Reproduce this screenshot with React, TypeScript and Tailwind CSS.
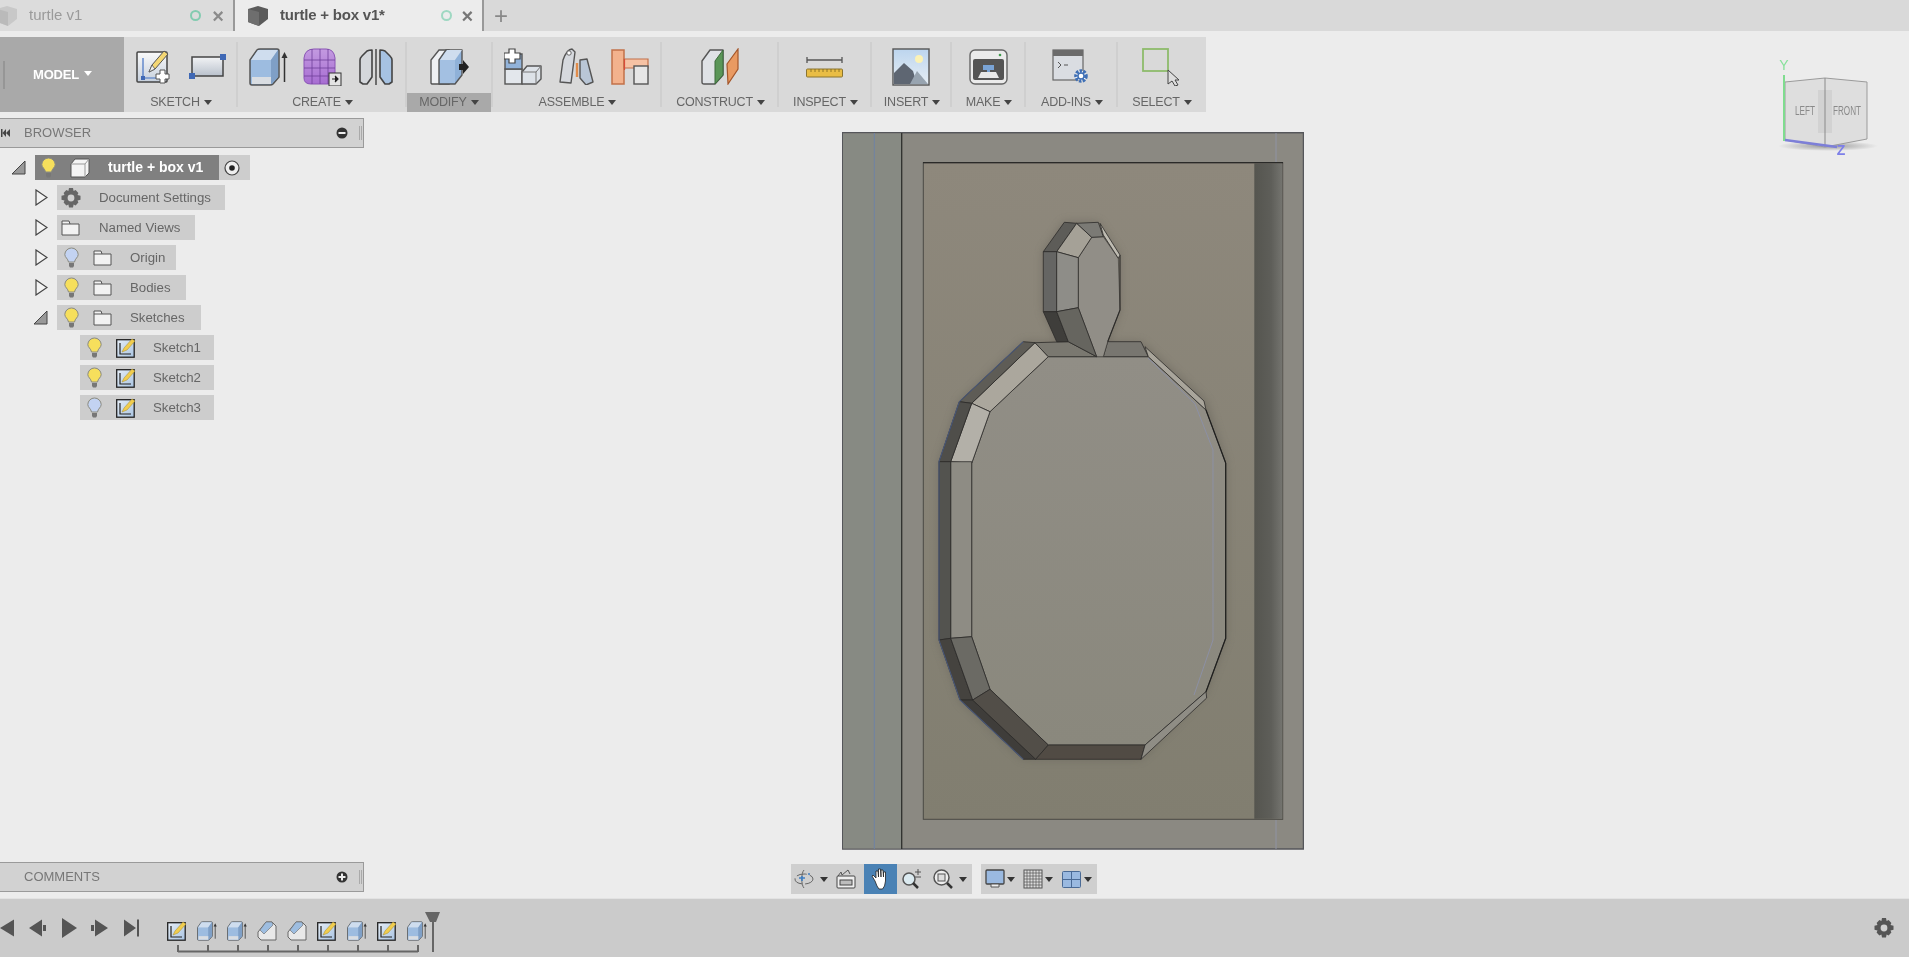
import type { ReactNode } from "react";

type SizeProps = { w?: number; h?: number };

const Caret = ({ color = "#555" }: { color?: string }) => (
  <svg width="8" height="5" viewBox="0 0 8 5" className="shrink-0">
    <path d="M0 0h8L4 5z" fill={color} />
  </svg>
);

const TabCube = ({ left, right }: { left: string; right: string }) => (
  <svg width="22" height="20" viewBox="0 0 22 20">
    <path d="M1 3l10-3 10 3v10l-9 7-11-4z" fill={right} />
    <path d="M1 3l11 3v14l-11-4z" fill={left} />
  </svg>
);

const SketchIcon = ({ w = 35, h = 34 }: SizeProps) => (
  <svg width={w} height={h} viewBox="0 0 35 34">
    <defs>
      <linearGradient id="sk1" x1="0" y1="0" x2="0" y2="1">
        <stop offset="0" stopColor="#fafafa" />
        <stop offset="1" stopColor="#c5cfdc" />
      </linearGradient>
    </defs>
    <rect x="1" y="2" width="30" height="30" rx="1" fill="url(#sk1)" stroke="#444" strokeWidth="1.5" />
    <path d="M7 8v20h18" fill="none" stroke="#4472c4" strokeWidth="1.2" />
    <rect x="5" y="26" width="4" height="4" fill="#3f68b5" />
    <path d="M13 22l3-7L28 1l4 3-13 15z" fill="#f4d774" stroke="#555" strokeWidth="1" />
    <path d="M13 22l3-7 3 4z" fill="#eee" stroke="#555" strokeWidth="0.8" />
    <path d="M24 20h5v4h4v5h-4v4h-5v-4h-4v-5h4z" fill="#fff" stroke="#555" strokeWidth="1" />
  </svg>
);

const RectIcon = () => (
  <svg width="37" height="25" viewBox="0 0 37 25">
    <defs>
      <linearGradient id="re1" x1="0" y1="0" x2="0" y2="1">
        <stop offset="0" stopColor="#f2f3f5" />
        <stop offset="1" stopColor="#b9c1cc" />
      </linearGradient>
    </defs>
    <rect x="3" y="3" width="31" height="19" fill="url(#re1)" stroke="#444" strokeWidth="1.5" />
    <rect x="31" y="0" width="6" height="6" fill="#3f68b5" />
    <rect x="0" y="19" width="6" height="6" fill="#3f68b5" />
  </svg>
);

const ExtrudeIcon = ({ w = 39, h = 38 }: SizeProps) => (
  <svg width={w} height={h} viewBox="0 0 39 38">
    <path d="M1 12L8 2q1-1 3-1h17q2 0 2 2v26l-6 7q-1 1-3 1H3q-2 0-2-2z" fill="#8fb1d8" stroke="#555" strokeWidth="1.5" strokeLinejoin="round" />
    <path d="M2 12h20v24H2z" fill="#9dbce0" />
    <path d="M2 12L9 2h20l-7 10z" fill="#cfddee" />
    <path d="M22 12L29 2v27l-7 7z" fill="#7f9fc6" />
    <path d="M3 29h19v7H3z" fill="#d9dde2" />
    <path d="M35.500 34V7" stroke="#333" strokeWidth="1.500" />
    <path d="M32.500 10l3-6 3 6z" fill="#333" />
  </svg>
);

const FormIcon = () => (
  <svg width="39" height="38" viewBox="0 0 39 38">
    <defs>
      <linearGradient id="fo1" x1="0" y1="0" x2="0" y2="1">
        <stop offset="0" stopColor="#c39ae0" />
        <stop offset="1" stopColor="#a76dd2" />
      </linearGradient>
    </defs>
    <path d="M1 10Q2 1 11 1h12q8 0 9 9v20q0 6-6 6H8q-7 0-7-6z" fill="url(#fo1)" stroke="#8a55b5" />
    <path d="M1 12h31M1 20h31M1 28h31M9 1v35M17 1v35M25 1v35" stroke="#6f3f99" strokeWidth="0.8" fill="none" />
    <rect x="26" y="25" width="12" height="13" fill="#e4e4e4" stroke="#333" />
    <path d="M29 31h4M32 28l3 3-3 3" stroke="#222" fill="#222" strokeWidth="1.2" />
  </svg>
);

const MirrorIcon = () => (
  <svg width="34" height="36" viewBox="0 0 34 36">
    <path d="M1 33V11q0-2 2-4l5-5q2-1 5-1v27l-5 7H4z" fill="#d4d7db" stroke="#444" strokeWidth="1.600" strokeLinejoin="round" />
    <path d="M33 33V11q0-2-2-4l-5-5q-2-1-5-1v27l5 7h4z" fill="#a6c2e2" stroke="#444" strokeWidth="1.600" strokeLinejoin="round" />
    <path d="M17 0v36" stroke="#333" strokeWidth="1.300" />
  </svg>
);

const PressPullIcon = () => (
  <svg width="39" height="38" viewBox="0 0 39 38">
    <path d="M1 35V12L9 2h10v34H3q-2 0-2-1z" fill="#eef0f3" stroke="#555" strokeWidth="1.400" />
    <path d="M9 36V12l7-10h16v25l-7 9z" fill="#8fb1d8" stroke="#555" strokeWidth="1.400" strokeLinejoin="round" />
    <path d="M10 12h15v23H10z" fill="#a3c0e2" />
    <path d="M10 12l7-10h15l-7 10z" fill="#cfddee" />
    <path d="M29 16h4v-4l6 7-6 7v-4h-4z" fill="#222" />
  </svg>
);

const NewComponentIcon = () => (
  <svg width="38" height="37" viewBox="0 0 38 37">
    <rect x="1" y="21" width="17" height="15" fill="#e3e7ec" stroke="#555" strokeWidth="1.400" />
    <path d="M1 6h17v15H1z" fill="#92b3da" stroke="#555" strokeWidth="1.400" />
    <path d="M18 24l5-6h14v13l-5 5H18z" fill="#dde2e8" stroke="#555" strokeWidth="1.400" strokeLinejoin="round" />
    <path d="M18 24h14l5-6M32 24v12" fill="none" stroke="#777" />
    <path d="M5 1h6v4h5v6h-5v4H5v-4H0V5h5z" fill="#fff" stroke="#444" strokeWidth="1.200" />
  </svg>
);

const JointIcon = () => (
  <svg width="35" height="37" viewBox="0 0 35 37">
    <path d="M1 34L4 12Q8 1 13 1l3 3-1 8-3 23z" fill="#d6d9de" stroke="#555" strokeWidth="1.400" strokeLinejoin="round" />
    <path d="M21 12l7-1 6 23-7 3-6-7z" fill="#b9c6d6" stroke="#555" strokeWidth="1.400" strokeLinejoin="round" />
    <circle cx="10" cy="5" r="2.200" fill="#fff" stroke="#666" />
    <path d="M18 15v14" stroke="#e18c4a" strokeWidth="2.400" />
  </svg>
);

const AsBuiltIcon = () => (
  <svg width="38" height="37" viewBox="0 0 38 37">
    <path d="M1 2h12v34H1z" fill="#f3b28d" stroke="#c2714a" strokeWidth="1.500" />
    <path d="M13 11h24v9H13z" fill="#f6c2a4" stroke="#c2714a" strokeWidth="1.200" />
    <path d="M13.500 11v11" stroke="#d94b3a" strokeWidth="1.200" />
    <rect x="23" y="18" width="14" height="18" fill="#e6e6e6" stroke="#555" strokeWidth="1.400" />
  </svg>
);

const PlaneIcon = () => (
  <svg width="38" height="37" viewBox="0 0 38 37">
    <path d="M1 13L9 2h13v25l-8 9H3q-2 0-2-2z" fill="#dfe2e6" stroke="#555" strokeWidth="1.400" strokeLinejoin="round" />
    <path d="M14 13l8-11v25l-8 9z" fill="#5a9658" stroke="#3d6b3c" />
    <path d="M26 16L37 1v20L27 36z" fill="#e99a62" stroke="#a4562a" strokeWidth="1.200" />
  </svg>
);

const RulerIcon = () => (
  <svg width="37" height="22" viewBox="0 0 37 22">
    <path d="M1 1v6M36 1v6M1 4h35" stroke="#555" strokeWidth="1.300" fill="none" />
    <rect x="0.500" y="13" width="36" height="8" rx="1" fill="#e9bd45" stroke="#8a7430" />
    <path d="M5 13v3M9 13v3M13 13v3M17 13v3M21 13v3M25 13v3M29 13v3M33 13v3" stroke="#7a6420" strokeWidth="0.800" />
  </svg>
);

const InsertIcon = () => (
  <svg width="38" height="38" viewBox="0 0 38 38">
    <defs>
      <linearGradient id="in1" x1="0" y1="0" x2="0" y2="1">
        <stop offset="0" stopColor="#bcd5ee" />
        <stop offset="1" stopColor="#e7eef4" />
      </linearGradient>
    </defs>
    <rect x="1" y="1" width="36" height="36" fill="url(#in1)" stroke="#555" strokeWidth="1.400" />
    <circle cx="27" cy="11" r="4" fill="#fbf2b5" />
    <path d="M2 36V25l10-10 9 8 4 13z" fill="#5e6672" />
    <path d="M18 36l7-13 11 13z" fill="#98a4b0" />
  </svg>
);

const MakeIcon = () => (
  <svg width="39" height="36" viewBox="0 0 39 36">
    <rect x="1" y="1" width="37" height="34" rx="5" fill="#ebebeb" stroke="#666" strokeWidth="1.400" />
    <rect x="4" y="10" width="31" height="21" rx="2" fill="#555" />
    <path d="M14 16h11v5h-4v2h-3v-2h-4z" fill="#7aa4d6" />
    <path d="M9 29l3-6h15l3 6z" fill="#e8e8e8" />
    <circle cx="31" cy="6" r="1.300" fill="#3f9b4c" />
  </svg>
);

const AddInIcon = () => (
  <svg width="38" height="36" viewBox="0 0 38 36">
    <rect x="1" y="1" width="30" height="30" fill="#dadde2" stroke="#666" strokeWidth="1.200" />
    <rect x="1" y="1" width="30" height="6" fill="#6b6b6b" />
    <path d="M6 13l3 3-3 3M12 16h4" fill="none" stroke="#555" />
    <circle cx="29" cy="27" r="5" fill="#fff" stroke="#3f6fb5" strokeWidth="3.600" strokeDasharray="2.400 1.200" />
    <circle cx="29" cy="27" r="3" fill="#fff" stroke="#3f6fb5" strokeWidth="1.400" />
  </svg>
);

const SelectIcon = () => (
  <svg width="38" height="38" viewBox="0 0 38 38">
    <rect x="1" y="1" width="25" height="22" fill="none" stroke="#8dbb6b" strokeWidth="1.800" />
    <path d="M26 22v14l4-3 3 5 3-1-3-5h4z" fill="#ddd" stroke="#444" strokeWidth="1" />
  </svg>
);

const Bulb = ({ off }: { off?: boolean }) => (
  <svg width="15" height="21" viewBox="0 0 15 21" className="shrink-0">
    <path
      d="M7.500 1A6.700 6.700 0 0 1 14.200 7.500C14.200 10.500 11 11.500 10.500 15h-6C4 11.500.8 10.500.8 7.500A6.700 6.700 0 0 1 7.500 1z"
      fill={off ? "#c3d3f2" : "#f6df5c"}
      stroke="#8a8a80"
    />
    <path d="M5 16h5v3l-1 1.500H6L5 19z" fill="#777" />
  </svg>
);

const FolderIcon = () => (
  <svg width="19" height="16" viewBox="0 0 19 16" className="shrink-0">
    <path d="M1 1h7l1 3h9v11H1z" fill="#f2f2f2" stroke="#555" />
    <path d="M1 4h8" stroke="#555" />
  </svg>
);

const GearIcon = ({ size = 20, color = "#666" }: { size?: number; color?: string }) => (
  <svg width={size} height={size} viewBox="0 0 20 20" className="shrink-0">
    <path
      d="M8 0h4l.6 3 2-.9 2.800 2.800L16.500 7l3 .8v4l-3 .7.9 2.100-2.800 2.800-2-.9-.6 3H8l-.6-3-2 .9-2.800-2.800.9-2.100-3-.7v-4l3-.8-.9-2.100L5.400 2.100l2 .9z"
      fill={color}
    />
    <circle cx="10" cy="10" r="3.400" fill="#d0d0d0" />
  </svg>
);

const SketchTiny = ({ size = 20 }: { size?: number }) => (
  <svg width={size} height={size} viewBox="0 0 20 20" className="shrink-0">
    <defs>
      <linearGradient id="st1" x1="0" y1="0" x2="1" y2="1">
        <stop offset="0" stopColor="#e6eef7" />
        <stop offset="1" stopColor="#a9c4e2" />
      </linearGradient>
    </defs>
    <rect x="0.700" y="1.700" width="17.500" height="17.500" fill="url(#st1)" stroke="#222" strokeWidth="1.300" />
    <path d="M4 5v11h11" stroke="#222" fill="none" strokeWidth="1.200" />
    <path d="M6 14l2-4 8-9 3 2-8 9z" fill="#f1cd4e" stroke="#a58a2a" strokeWidth="0.500" />
  </svg>
);

const ChamferTiny = () => (
  <svg width="20" height="20" viewBox="0 0 20 20">
    <path d="M1 11L9 1h6l4 4v14H4l-3-3z" fill="#e8e8e8" stroke="#666" />
    <path d="M3 9l6-8 6 0 1 3-9 9z" fill="#9dbde0" stroke="#666" strokeWidth="0.600" />
  </svg>
);

const TreeArrow = ({ open }: { open?: boolean }) =>
  open ? (
    <svg width="15" height="15" viewBox="0 0 15 15" className="shrink-0">
      <path d="M1 14L14 1v13z" fill="#999" stroke="#444" />
    </svg>
  ) : (
    <svg width="13" height="17" viewBox="0 0 13 17" className="shrink-0">
      <path d="M1 1l11 7.500L1 16z" fill="#f3f3f3" stroke="#444" strokeWidth="1.200" />
    </svg>
  );

const PanelHeader = ({ title, sign, back }: { title: string; sign: "-" | "+"; back?: boolean }) => (
  <div className="flex h-[30px] w-[364px] items-center border-y border-r border-[#9a9a9a] bg-[#d2d2d2]">
    <div className="w-[24px] pl-[1px]">
      {back && (
        <svg width="9" height="8" viewBox="0 0 9 8" className="block">
          <path d="M0 0h1.500v8H0zM5 0v8L1.500 4zM9 0v8L5 4z" fill="#444" />
        </svg>
      )}
    </div>
    <span className="text-[13px] text-[#777]">{title}</span>
    <svg width="12" height="12" viewBox="0 0 12 12" className="ml-auto mr-[1px]">
      <circle cx="6" cy="6" r="5.500" fill="#333" />
      <path d={sign === "-" ? "M2.500 5h7v2h-7z" : "M2.500 5h2.500V2.500h2V5h2.500v2H7v2.500H5V7H2.500z"} fill="#eee" />
    </svg>
    <div className="ml-[10px] mr-[1px] h-[14px] w-[3px] border-x border-[#aaa]" />
  </div>
);

const TreeRow = ({
  indent,
  arrow,
  width,
  textGap,
  children,
  icon,
}: {
  indent: string;
  arrow?: ReactNode;
  width: string;
  textGap: string;
  children: string;
  icon: ReactNode;
}) => (
  <div className={`flex h-[25px] items-center ${indent}`}>
    {arrow}
    <div className={`flex h-[25px] items-center bg-[#cdcdcd] text-[13.250px] text-[#666] ${width}`}>
      {icon}
      <span className={textGap}>{children}</span>
    </div>
  </div>
);

const Group = ({
  label,
  width,
  pad,
  gap = "gap-0",
  active,
  children,
}: {
  label: string;
  width: string;
  pad: string;
  gap?: string;
  active?: boolean;
  children: ReactNode;
}) => (
  <div className={`relative flex flex-col ${width}`}>
    <div className={`flex h-[56px] items-center pt-[3px] ${pad} ${gap}`}>{children}</div>
    <div
      className={`flex h-[19px] items-center justify-center gap-[4px] text-[12.500px] tracking-[-0.2px] text-[#666] ${
        active ? "mr-[2px] bg-[#a9a9a9]" : ""
      }`}
    >
      {label}
      <Caret color="#444" />
    </div>
    <div className="absolute right-0 top-[5px] h-[65px] w-[2px] bg-[#cfcfcf]" />
  </div>
);

const Model = () => (
  <svg width="462" height="718" viewBox="842 132 462 718" className="block">
    <defs>
      <linearGradient id="floor" x1="0" y1="0" x2="0" y2="1">
        <stop offset="0" stopColor="#8e887c" />
        <stop offset="1" stopColor="#817e70" />
      </linearGradient>
      <linearGradient id="wall" x1="0" y1="0" x2="1" y2="0">
        <stop offset="0" stopColor="#55554f" />
        <stop offset="0.6" stopColor="#5e5e59" />
        <stop offset="1" stopColor="#74746f" />
      </linearGradient>
      <linearGradient id="face" x1="0" y1="0" x2="0" y2="1">
        <stop offset="0" stopColor="#918e86" />
        <stop offset="1" stopColor="#8a887d" />
      </linearGradient>
      <filter id="soft" x="-10%" y="-10%" width="120%" height="120%">
        <feGaussianBlur stdDeviation="5" />
      </filter>
    </defs>
    <rect x="842.500" y="132.700" width="461" height="716.300" fill="#8b8982" stroke="#55565a" strokeWidth="1.500" />
    <rect x="843" y="133.500" width="58.700" height="715" fill="#878a83" />
    <path d="M874.300 133v716" stroke="#6f82a6" strokeWidth="1" />
    <path d="M901.700 133v716" stroke="#2f2f2d" strokeWidth="1.300" />
    <path d="M1276 133v30M1276 819v30" stroke="#8f93a3" strokeWidth="1" />
    <rect x="923.300" y="162.700" width="359.400" height="656.600" fill="url(#floor)" stroke="#4a4944" strokeWidth="1" />
    <rect x="1254.300" y="163.400" width="28" height="655.400" fill="url(#wall)" />
    <path d="M923 162.700h360" stroke="#2a2a28" strokeWidth="1.300" />

    {/* soft shadow round the raised shape */}
    <path
      d="M1064 222H1098L1120 255V310L1108 342H1141L1206 401 1226 463V638L1206 692 1141 759H1023L960 700 939 640V462L959 402 1023 342H1057L1043 310V252z"
      fill="#5a574f"
      opacity="0.45"
      filter="url(#soft)"
    />

    {/* top face */}
    <path
      d="M1048.300 356.700H1148.300L1206 410 1225.700 463V638.300L1206 691.700 1145 745H1048.300L990 689.300 971.700 636.700V463.300L990 411.700z"
      fill="url(#face)"
      stroke="#3a3936"
      strokeWidth="0.800"
    />
    {/* ghost outline */}
    <path d="M1148 358L1195 404 1213 450V640L1194 695" fill="none" stroke="#8c90a4" strokeWidth="1" />

    {/* bevels */}
    <g stroke="#2c2b29" strokeWidth="0.800" strokeLinejoin="round">
      <path d="M1035 342.700L1048.300 356.700 990 411.700 971.700 403.300z" fill="#aba79d" />
      <path d="M1023.300 341.700L1035 342.700 971.700 403.300 959.300 401.700z" fill="#5e5c56" />
      <path d="M971.700 403.300L950.700 461.700 971.700 463.300 990 411.700z" fill="#b3b0a8" />
      <path d="M959.300 401.700L939 461.700H950.700L971.700 403.300z" fill="#4f4e4a" />
      <path d="M950.700 461.700H971.700V636.700L950.700 638.300z" fill="#8e8c84" />
      <path d="M939 461.700H950.700V638.300L939 640z" fill="#53534f" />
      <path d="M939 640L950.700 638.300 972.700 700H960z" fill="#45433f" />
      <path d="M950.700 638.300L971.700 636.700 990 689.300 972.700 700z" fill="#6b6a64" />
      <path d="M960 700H972.700L1035.700 759.300H1023.300z" fill="#3f3d3a" />
      <path d="M972.700 700L990 689.300 1048.300 745 1035.700 759.300z" fill="#524e48" />
      <path d="M1048.300 745H1145L1141 759.300H1035.700z" fill="#514b44" />
      <path d="M1145 745L1206 691.700 1206.700 698 1141 759.300z" fill="#8f8d85" />
      <path d="M1035 342.700L1048.300 356.700H1096.700L1068.300 341.700z" fill="#7a7870" />
      <path d="M1103.300 356.700L1107.700 341.700H1141L1148.300 356.700z" fill="#787670" />
      <path d="M1145 346.700L1204 401 1206 410 1148.300 356.700z" fill="#a9a59b" />

      {/* head */}
      <path d="M1078.300 257.700L1091.700 237.300 1103.300 236.700 1118.300 258.300 1120 310 1107.700 341.700 1103.300 356.700H1096.700L1078.300 307.700z" fill="#918e87" strokeWidth="0.500" />
      <path d="M1120 255V310L1107.700 341.700" fill="none" strokeWidth="1.100" />
      <path d="M1064.300 222.300L1076.700 223.300 1056.700 251.700H1043.300z" fill="#5d5c58" />
      <path d="M1076.700 223.300L1091.700 237.300 1078.300 257.700 1056.700 251.700z" fill="#a5a197" />
      <path d="M1076.700 223.300L1098.300 222.300 1103.300 236.700 1091.700 237.300z" fill="#7b7a75" />
      <path d="M1100 223.300L1120 255 1118.300 258.300 1103.300 235z" fill="#bfbcb2" />
      <path d="M1043.300 251.700H1056.700V311.700H1043.300z" fill="#656563" />
      <path d="M1056.700 251.700L1078.300 257.700V307.700L1056.700 311.700z" fill="#8e8d88" />
      <path d="M1043.300 311.700H1056.700L1068.300 341.700H1056.700z" fill="#3f3e3b" />
      <path d="M1056.700 311.700L1078.300 307.700 1096.700 356.700 1068.300 341.700z" fill="#66655f" />
    </g>
    <path d="M1225.700 463V638.300L1206 691.700M1206 410L1225.700 463" fill="none" stroke="#1f1f1e" strokeWidth="1.200" />
    <path d="M1023.300 341.700L959.300 401.700 939 461.700V640L960 700 1023.300 759.300" fill="none" stroke="#4a5878" strokeWidth="1.100" />
  </svg>
);

const ViewCube = () => (
  <svg width="110" height="110" viewBox="1770 50 110 110" className="absolute left-[1770px] top-[50px]">
    <defs>
      <radialGradient id="cubeShadow">
        <stop offset="0" stopColor="#777" stopOpacity="0.7" />
        <stop offset="1" stopColor="#777" stopOpacity="0" />
      </radialGradient>
    </defs>
    <ellipse cx="1828" cy="146" rx="50" ry="5" fill="url(#cubeShadow)" />
    <path d="M1785 82L1825 78 1867 82V139L1825 147 1785 140z" fill="#dedede" stroke="#9b9b9b" />
    <rect x="1818" y="90" width="14" height="43" fill="#d2d2d2" />
    <path d="M1825 78V147" stroke="#8a8a8a" />
    <text x="1805" y="115" textAnchor="middle" textLength="20" lengthAdjust="spacingAndGlyphs" fontSize="12" fill="#8a8a8a">
      LEFT
    </text>
    <text x="1847" y="115" textAnchor="middle" textLength="28" lengthAdjust="spacingAndGlyphs" fontSize="12" fill="#8a8a8a">
      FRONT
    </text>
    <path d="M1784 75V141" stroke="#7fdc8f" strokeWidth="2" />
    <path d="M1785 140L1837 147" stroke="#7d7fd8" strokeWidth="2.500" />
    <text x="1784" y="70" textAnchor="middle" fontSize="14" fill="#86e19a">
      Y
    </text>
    <text x="1841" y="155" textAnchor="middle" fontSize="14" fontWeight="bold" fill="#7d7fe8">
      Z
    </text>
  </svg>
);

const NavBar = () => (
  <div className="mt-[14px] flex h-[30px] gap-[9px]">
    <div className="flex w-[181px] items-center bg-[#cfcfcf]">
      <svg width="21" height="20" viewBox="0 0 21 20" className="ml-[3px]">
        <ellipse cx="10" cy="10" rx="9" ry="5" fill="none" stroke="#666" strokeDasharray="10 3" />
        <path d="M10 1c-3 3-3 15 0 18" fill="none" stroke="#666" />
        <path d="M5 9h6M8 7v5" stroke="#3f7fc4" strokeWidth="1.600" />
        <circle cx="15" cy="5" r="1" fill="#3f7fc4" />
      </svg>
      <div className="ml-[5px]">
        <Caret color="#333" />
      </div>
      <svg width="20" height="20" viewBox="0 0 20 20" className="ml-[8px]">
        <path d="M2 7l3-4 1 3 6-5 2 4" fill="none" stroke="#555" />
        <rect x="1" y="7" width="18" height="12" rx="1" fill="#efefef" stroke="#444" />
        <rect x="4" y="11" width="12" height="5" fill="#bdbdbd" stroke="#444" />
      </svg>
      <div className="ml-[8px] flex h-[30px] w-[33px] items-center justify-center bg-[#4a82b5]">
        <svg width="20" height="22" viewBox="0 0 20 22">
          <path
            d="M4 13L1 8l1-1 3 3V3h2l.5 6V1h2l.5 8V2h2l.5 7V4h2v9l-1 5-2 3H8l-2-3z"
            fill="#fff"
            stroke="#222"
            strokeWidth="0.800"
          />
        </svg>
      </div>
      <svg width="20" height="20" viewBox="0 0 20 20" className="ml-[4px]">
        <circle cx="8" cy="10" r="6" fill="#dbeaf0" stroke="#555" strokeWidth="1.500" />
        <path d="M12 14l5 5" stroke="#333" strokeWidth="2.500" />
        <path d="M14 3h6M17 0v6M14 8h6" stroke="#555" strokeWidth="1" />
      </svg>
      <svg width="20" height="20" viewBox="0 0 20 20" className="ml-[12px]">
        <circle cx="8.500" cy="8.500" r="7.500" fill="#eee" stroke="#555" strokeWidth="1.500" />
        <rect x="5" y="5" width="7" height="7" fill="#ddd" stroke="#555" />
        <path d="M14 14l5 5" stroke="#333" strokeWidth="2.500" />
      </svg>
      <div className="ml-[6px]">
        <Caret color="#333" />
      </div>
    </div>
    <div className="flex w-[116px] items-center bg-[#cfcfcf]">
      <svg width="20" height="20" viewBox="0 0 20 20" className="ml-[4px]">
        <rect x="1" y="1" width="18" height="14" rx="1" fill="#9ab9e0" stroke="#444" strokeWidth="1.300" />
        <path d="M6 15h8v3H6z" fill="#eee" stroke="#555" />
      </svg>
      <div className="ml-[2px]">
        <Caret color="#333" />
      </div>
      <svg width="20" height="20" viewBox="0 0 20 20" className="ml-[8px]">
        <rect x="1" y="1" width="18" height="18" fill="#ddd" stroke="#555" />
        <path d="M4 1v18M7 1v18M10 1v18M13 1v18M16 1v18M1 4h18M1 7h18M1 10h18M1 13h18M1 16h18" stroke="#555" strokeWidth="0.700" />
      </svg>
      <div className="ml-[2px]">
        <Caret color="#333" />
      </div>
      <svg width="19" height="17" viewBox="0 0 19 17" className="ml-[9px]">
        <rect x="0.500" y="0.500" width="18" height="16" rx="1" fill="#9ab9e0" stroke="#4a6a95" />
        <path d="M9.500 0v17M0 8.500h19" stroke="#4a6a95" />
      </svg>
      <div className="ml-[3px]">
        <Caret color="#333" />
      </div>
    </div>
  </div>
);

const Timeline = () => {
  const ticks = [0, 30, 60, 90, 120, 150, 180, 210, 240];
  return (
    <div className="flex h-[59px] items-center border-t border-[#e2e2e2] bg-[#cbcbcb] text-[#555]">
      <svg width="140" height="22" viewBox="0 0 140 22" className="shrink-0">
        <path d="M0 11L14 2.500v17z" fill="#555" />
        <path d="M29 11l13-8.500v17zM43 8h3v6h-3z" fill="#555" />
        <path d="M62 1l15 10-15 10z" fill="#555" />
        <path d="M91 8h3v6h-3zM95 2.500l13 8.500-13 8.500z" fill="#555" />
        <path d="M124 2.500l12 8.500-12 8.500zM137 2.500h2v17h-2z" fill="#555" />
      </svg>
      <div className="relative ml-[27px] h-[59px] w-[270px]">
        <div className="flex h-[42px] items-end gap-[10px]">
          <SketchTiny />
          <ExtrudeIcon w={20} h={20} />
          <ExtrudeIcon w={20} h={20} />
          <ChamferTiny />
          <ChamferTiny />
          <SketchTiny />
          <ExtrudeIcon w={20} h={20} />
          <SketchTiny />
          <ExtrudeIcon w={20} h={20} />
        </div>
        <svg width="255" height="10" viewBox="0 0 255 10" className="mt-[3px] ml-[10px]">
          <path d="M1 7.500H241" stroke="#666" strokeWidth="2" />
          {ticks.map((t) => (
            <path key={t} d={`M${t + 1} 1V8`} stroke="#666" strokeWidth="2" />
          ))}
        </svg>
        {/* playhead */}
        <svg width="16" height="41" viewBox="0 0 16 41" className="absolute left-[258px] top-[13px]">
          <path d="M0 0h15l-4 10H9v30H7V10H5z" fill="#666" />
        </svg>
      </div>
      <div className="ml-auto mr-[15px]">
        <GearIcon size={20} color="#555" />
      </div>
    </div>
  );
};

const App = () => {
  return (
    <div className="relative flex h-[957px] w-[1909px] flex-col overflow-hidden bg-[#ececec] font-['Liberation_Sans',Arial,sans-serif] blur-[0.5px]">
      {/* tabs */}
      <div className="flex h-[31px] items-center bg-[#d9d9d9]">
        <div className="flex h-[31px] w-[233px] items-center bg-[#dcdcdc] text-[15px] text-[#9a9a9a]">
          <div className="-ml-[4px] opacity-50">
            <TabCube left="#9a9a9a" right="#b5b5b5" />
          </div>
          <span className="ml-[11px]">turtle v1</span>
          <span className="ml-auto h-[11px] w-[11px] rounded-full border-2 border-[#83cbb0]" />
          <span className="ml-[11px] mr-[9px] text-[20px] font-bold leading-none text-[#8a8a8a]">×</span>
        </div>
        <div className="h-[31px] w-[2px] bg-[#999]" />
        <div className="flex h-[31px] w-[247px] items-center bg-[#ececec] text-[15px] font-bold tracking-[-0.2px] text-[#555]">
          <div className="ml-[12px]">
            <TabCube left="#6e6e6e" right="#5a5a5a" />
          </div>
          <span className="ml-[11px]">turtle + box v1*</span>
          <span className="ml-auto h-[11px] w-[11px] rounded-full border-2 border-[#9fd8c2]" />
          <span className="ml-[10px] mr-[9px] text-[20px] font-bold leading-none text-[#777]">×</span>
        </div>
        <div className="h-[31px] w-[2px] bg-[#999]" />
        <span className="ml-[10px] text-[24px] leading-none text-[#888]">+</span>
      </div>

      {/* toolbar */}
      <div className="pt-[6px]">
        <div className="flex h-[75px] w-[1206px] bg-[#d9d9d9]">
          <div className="flex w-[124px] items-center bg-[#a9a9a9] pl-[3px]">
            <div className="h-[28px] w-[2px] bg-[#969696]" />
            <span className="ml-[28px] text-[13px] font-bold tracking-[-0.2px] text-white">MODEL</span>
            <div className="ml-[5px] -mt-[2px]">
              <Caret color="#fff" />
            </div>
          </div>
          <Group label="SKETCH" width="w-[114px]" pad="pl-[12px]" gap="gap-[18px]">
            <SketchIcon />
            <RectIcon />
          </Group>
          <Group label="CREATE" width="w-[169px]" pad="pl-[11px]" gap="gap-[15px]">
            <ExtrudeIcon />
            <FormIcon />
            <div className="ml-[2px]">
              <MirrorIcon />
            </div>
          </Group>
          <Group label="MODIFY" width="w-[86px]" pad="pl-[23px]" active>
            <PressPullIcon />
          </Group>
          <Group label="ASSEMBLE" width="w-[169px]" pad="pl-[11px]" gap="gap-[17px]">
            <NewComponentIcon />
            <JointIcon />
            <AsBuiltIcon />
          </Group>
          <Group label="CONSTRUCT" width="w-[117px]" pad="pl-[39px]">
            <PlaneIcon />
          </Group>
          <Group label="INSPECT" width="w-[93px]" pad="pl-[27px]">
            <RulerIcon />
          </Group>
          <Group label="INSERT" width="w-[80px]" pad="pl-[20px]">
            <InsertIcon />
          </Group>
          <Group label="MAKE" width="w-[74px]" pad="pl-[17px]">
            <MakeIcon />
          </Group>
          <Group label="ADD-INS" width="w-[92px]" pad="pl-[26px]">
            <AddInIcon />
          </Group>
          <div className="flex w-[88px] flex-col">
            <div className="flex h-[56px] items-center pl-[24px] pt-[3px]">
              <SelectIcon />
            </div>
            <div className="flex h-[19px] items-center justify-center gap-[4px] text-[12.500px] tracking-[-0.2px] text-[#666]">
              SELECT
              <Caret color="#444" />
            </div>
          </div>
        </div>
      </div>

      {/* browser + canvas */}
      <div className="flex min-h-0 flex-1">
        <div className="flex w-[364px] flex-col pt-[6px] pb-[6px]">
          <PanelHeader title="BROWSER" sign="-" back />
          <div className="flex flex-col gap-[5px] pt-[7px]">
            <div className="flex h-[25px] items-center pl-[11px]">
              <TreeArrow open />
              <div className="ml-[9px] flex h-[25px] w-[184px] items-center bg-[#808080] pl-[6px] text-[14px] font-bold text-white">
                <Bulb />
                <svg width="20" height="20" viewBox="0 0 20 20" className="ml-[14px]">
                  <path d="M1 6l4-5h14v14l-4 4H1z" fill="#f4f4f4" stroke="#555" />
                  <path d="M1 6h14v13M15 6l4-5" fill="none" stroke="#999" />
                </svg>
                <span className="ml-[18px]">turtle + box v1</span>
              </div>
              <div className="flex h-[25px] w-[31px] items-center bg-[#cdcdcd] pl-[5px]">
                <svg width="16" height="16" viewBox="0 0 16 16">
                  <circle cx="8" cy="8" r="7" fill="#eee" stroke="#444" strokeWidth="1.200" />
                  <circle cx="8" cy="8" r="2.800" fill="#222" />
                </svg>
              </div>
            </div>
            <TreeRow indent="pl-[35px]" width="ml-[9px] w-[168px] pl-[4px]" textGap="ml-[18px]" arrow={<TreeArrow />} icon={<GearIcon />}>
              Document Settings
            </TreeRow>
            <TreeRow indent="pl-[35px]" width="ml-[9px] w-[138px] pl-[4px]" textGap="ml-[19px]" arrow={<TreeArrow />} icon={<FolderIcon />}>
              Named Views
            </TreeRow>
            <TreeRow
              indent="pl-[35px]"
              width="ml-[9px] w-[119px] pl-[7px]"
              textGap="ml-[18px]"
              arrow={<TreeArrow />}
              icon={
                <>
                  <Bulb off />
                  <span className="ml-[14px]">
                    <FolderIcon />
                  </span>
                </>
              }
            >
              Origin
            </TreeRow>
            <TreeRow
              indent="pl-[35px]"
              width="ml-[9px] w-[129px] pl-[7px]"
              textGap="ml-[18px]"
              arrow={<TreeArrow />}
              icon={
                <>
                  <Bulb />
                  <span className="ml-[14px]">
                    <FolderIcon />
                  </span>
                </>
              }
            >
              Bodies
            </TreeRow>
            <TreeRow
              indent="pl-[33px]"
              width="ml-[9px] w-[144px] pl-[7px]"
              textGap="ml-[18px]"
              arrow={<TreeArrow open />}
              icon={
                <>
                  <Bulb />
                  <span className="ml-[14px]">
                    <FolderIcon />
                  </span>
                </>
              }
            >
              Sketches
            </TreeRow>
            {[false, false, true].map((off, i) => (
              <TreeRow
                key={i}
                indent="pl-[80px]"
                width="w-[134px] pl-[7px]"
                textGap="ml-[17px]"
                icon={
                  <>
                    <Bulb off={off} />
                    <span className="ml-[14px]">
                      <SketchTiny />
                    </span>
                  </>
                }
              >
                {`Sketch${i + 1}`}
              </TreeRow>
            ))}
          </div>
          <div className="mt-auto">
            <PanelHeader title="COMMENTS" sign="+" />
          </div>
        </div>

        <div className="flex flex-col pl-[427px] pt-[20px]">
          <div className="ml-[51px]">
            <Model />
          </div>
          <NavBar />
        </div>
      </div>

      <Timeline />
      <ViewCube />
    </div>
  );
};

export default App;
